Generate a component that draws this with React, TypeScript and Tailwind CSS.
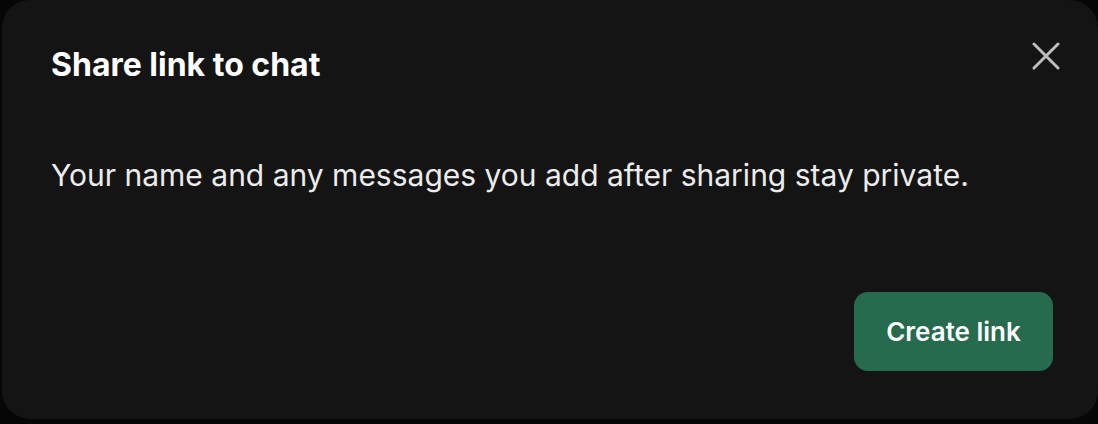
import React from "react";

const CloseIcon: React.FC = () => (
  <svg width="28" height="28" viewBox="0 0 28 28" fill="none">
    <path
      d="M2 2L26 26M26 2L2 26"
      stroke="#bdbdbd"
      strokeWidth="3"
      strokeLinecap="round"
    />
  </svg>
);

export default function App() {
  return (
    <div
      className="min-h-screen bg-[#060606] pl-[2px]"
      style={{ fontFamily: "Inter, 'Noto Sans', sans-serif" }}
    >
      <div className="w-[1096px] h-[419px] rounded-[28px] bg-[#141414] flex flex-col pl-[49px] pr-[45px] pt-[47px] pb-[48px]">
        <div className="flex items-start justify-between">
          <h2 className="text-white font-bold text-[32px] leading-[36px]">
            Share link to chat
          </h2>
          <button className="-mt-[5px] -mr-[7px]" aria-label="Close">
            <CloseIcon />
          </button>
        </div>
        <p className="mt-[74px] text-[#ececec] text-[30px] leading-[36px]">
          Your name and any messages you add after sharing stay private.
        </p>
        <div className="flex-1" />
        <div className="flex justify-end">
          <button className="w-[199px] h-[79px] rounded-[14px] bg-[#276b4f] text-white font-semibold text-[26px]">
            Create link
          </button>
        </div>
      </div>
    </div>
  );
}
